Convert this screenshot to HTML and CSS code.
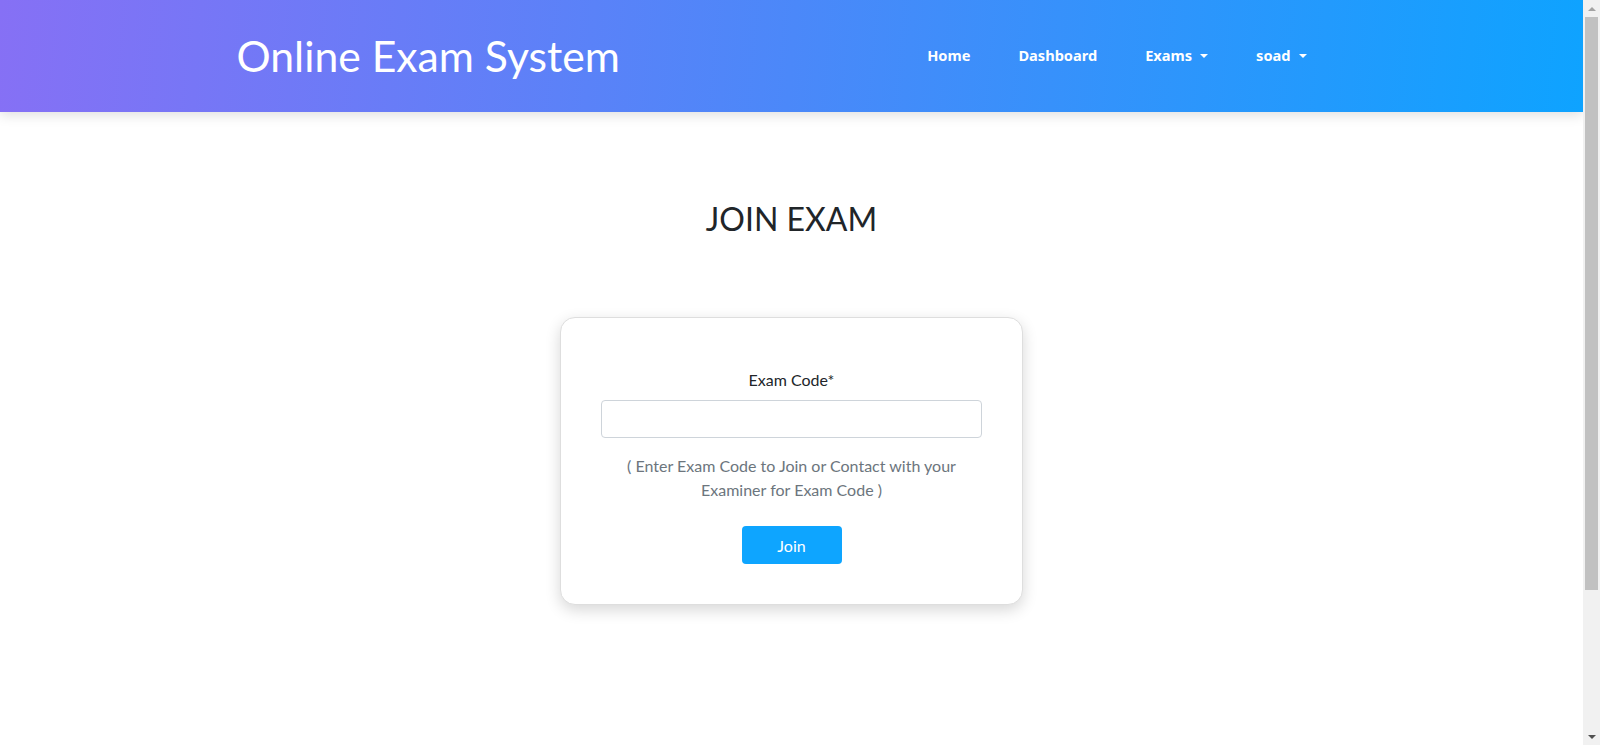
FILE: index.html
```html
<!DOCTYPE html>
<html lang="en">
<head>
<meta charset="utf-8">
<title>Join Exam - Online Exam System</title>
<link rel="stylesheet" href="styles.css">
</head>
<body>
<div class="app">
  <header class="navbar">
    <div class="container nav-inner">
      <a class="brand" href="#">Online Exam System</a>
      <ul class="nav-links">
        <li><a class="nav-link" href="#">Home</a></li>
        <li><a class="nav-link" href="#">Dashboard</a></li>
        <li><a class="nav-link dropdown-toggle" href="#">Exams</a></li>
        <li><a class="nav-link dropdown-toggle" href="#">soad</a></li>
      </ul>
    </div>
  </header>
  <main class="container page">
    <h1 class="page-title">JOIN EXAM</h1>
    <div class="card">
      <form class="join-form">
        <label class="form-label" for="code">Exam Code*</label>
        <input class="form-control" id="code" type="text">
        <p class="help-text">( Enter Exam Code to Join or Contact with your Examiner for Exam Code )</p>
        <button class="btn-join" type="button">Join</button>
      </form>
    </div>
  </main>
</div>
<div class="scrollbar" aria-hidden="true">
  <div class="sb-arrow sb-up"></div>
  <div class="sb-track"><div class="sb-thumb"></div></div>
  <div class="sb-arrow sb-down"></div>
</div>
</body>
</html>
```
FILE: styles.css
```css
* { box-sizing: border-box; }
html, body { margin: 0; padding: 0; }
body {
  font-family: "Lato", "Liberation Sans", sans-serif;
  font-size: 16px;
  line-height: 1.5;
  color: #212529;
  background: #fff;
  display: flex;
  height: 745px;
  overflow: hidden;
}
.app {
  flex: 1;
  min-width: 0;
}
.container {
  max-width: 1140px;
  margin: 0 auto;
  padding: 0 15px;
}
.navbar {
  height: 112px;
  background: linear-gradient(95deg, #8670f5 0%, #4b88f9 50%, #0ea3ff 100%);
  box-shadow: 0 3px 12px rgba(0, 0, 0, 0.13);
}
.nav-inner {
  height: 100%;
  display: flex;
  align-items: center;
  justify-content: space-between;
}
.brand {
  font-family: "Lato", sans-serif;
  font-size: 42.7px;
  line-height: 1.2;
  color: #fff;
  text-decoration: none;
  margin-top: -1px;
}
.nav-links {
  list-style: none;
  margin: 0 16px 0 0;
  padding: 0;
  display: flex;
  align-items: center;
}
.nav-link {
  display: block;
  padding: 8px 24px;
  font-family: "Noto Sans", "Open Sans", sans-serif;
  font-weight: 700;
  font-size: 14.6px;
  color: #fff;
  text-decoration: none;
}
.dropdown-toggle::after {
  content: "";
  display: inline-block;
  margin-left: 8px;
  vertical-align: 3px;
  border-top: 4.5px solid #fff;
  border-left: 4.5px solid transparent;
  border-right: 4.5px solid transparent;
}
.page {
  display: flex;
  flex-direction: column;
  align-items: center;
}
.page-title {
  margin: 88px 0 79px;
  font-size: 32px;
  font-weight: 400;
  line-height: 1.2;
  color: #212529;
}
.card {
  width: 463px;
  border: 1px solid #dedede;
  border-radius: 15px;
  background: #fff;
  padding: 50px 40px 40px;
  box-shadow: 0 5px 15px rgba(0, 0, 0, 0.16);
}
.join-form {
  display: flex;
  flex-direction: column;
  align-items: center;
}
.form-label {
  display: block;
  margin-bottom: 8px;
}
.form-control {
  width: 100%;
  height: 38px;
  border: 1px solid #ced4da;
  border-radius: 4px;
  padding: 6px 12px;
  font: inherit;
}
.help-text {
  margin: 16px 0 24px;
  text-align: center;
  color: #6c757d;
}
.btn-join {
  width: 100px;
  height: 38px;
  border: none;
  border-radius: 4px;
  background: #0ea5ff;
  color: #fff;
  font-family: "Lato", sans-serif;
  font-size: 16px;
}
.scrollbar {
  flex: 0 0 17px;
  height: 745px;
  background: #f1f1f1;
  display: flex;
  flex-direction: column;
}
.sb-arrow {
  flex: 0 0 17px;
  display: flex;
  align-items: center;
  justify-content: center;
}
.sb-up::before {
  content: "";
  border-bottom: 4px solid #a3a3a3;
  border-left: 4px solid transparent;
  border-right: 4px solid transparent;
}
.sb-down::before {
  content: "";
  border-top: 4px solid #505050;
  border-left: 4px solid transparent;
  border-right: 4px solid transparent;
}
.sb-track {
  flex: 1;
  padding: 0 2px;
}
.sb-thumb {
  height: 573px;
  background: #c1c1c1;
}
```
